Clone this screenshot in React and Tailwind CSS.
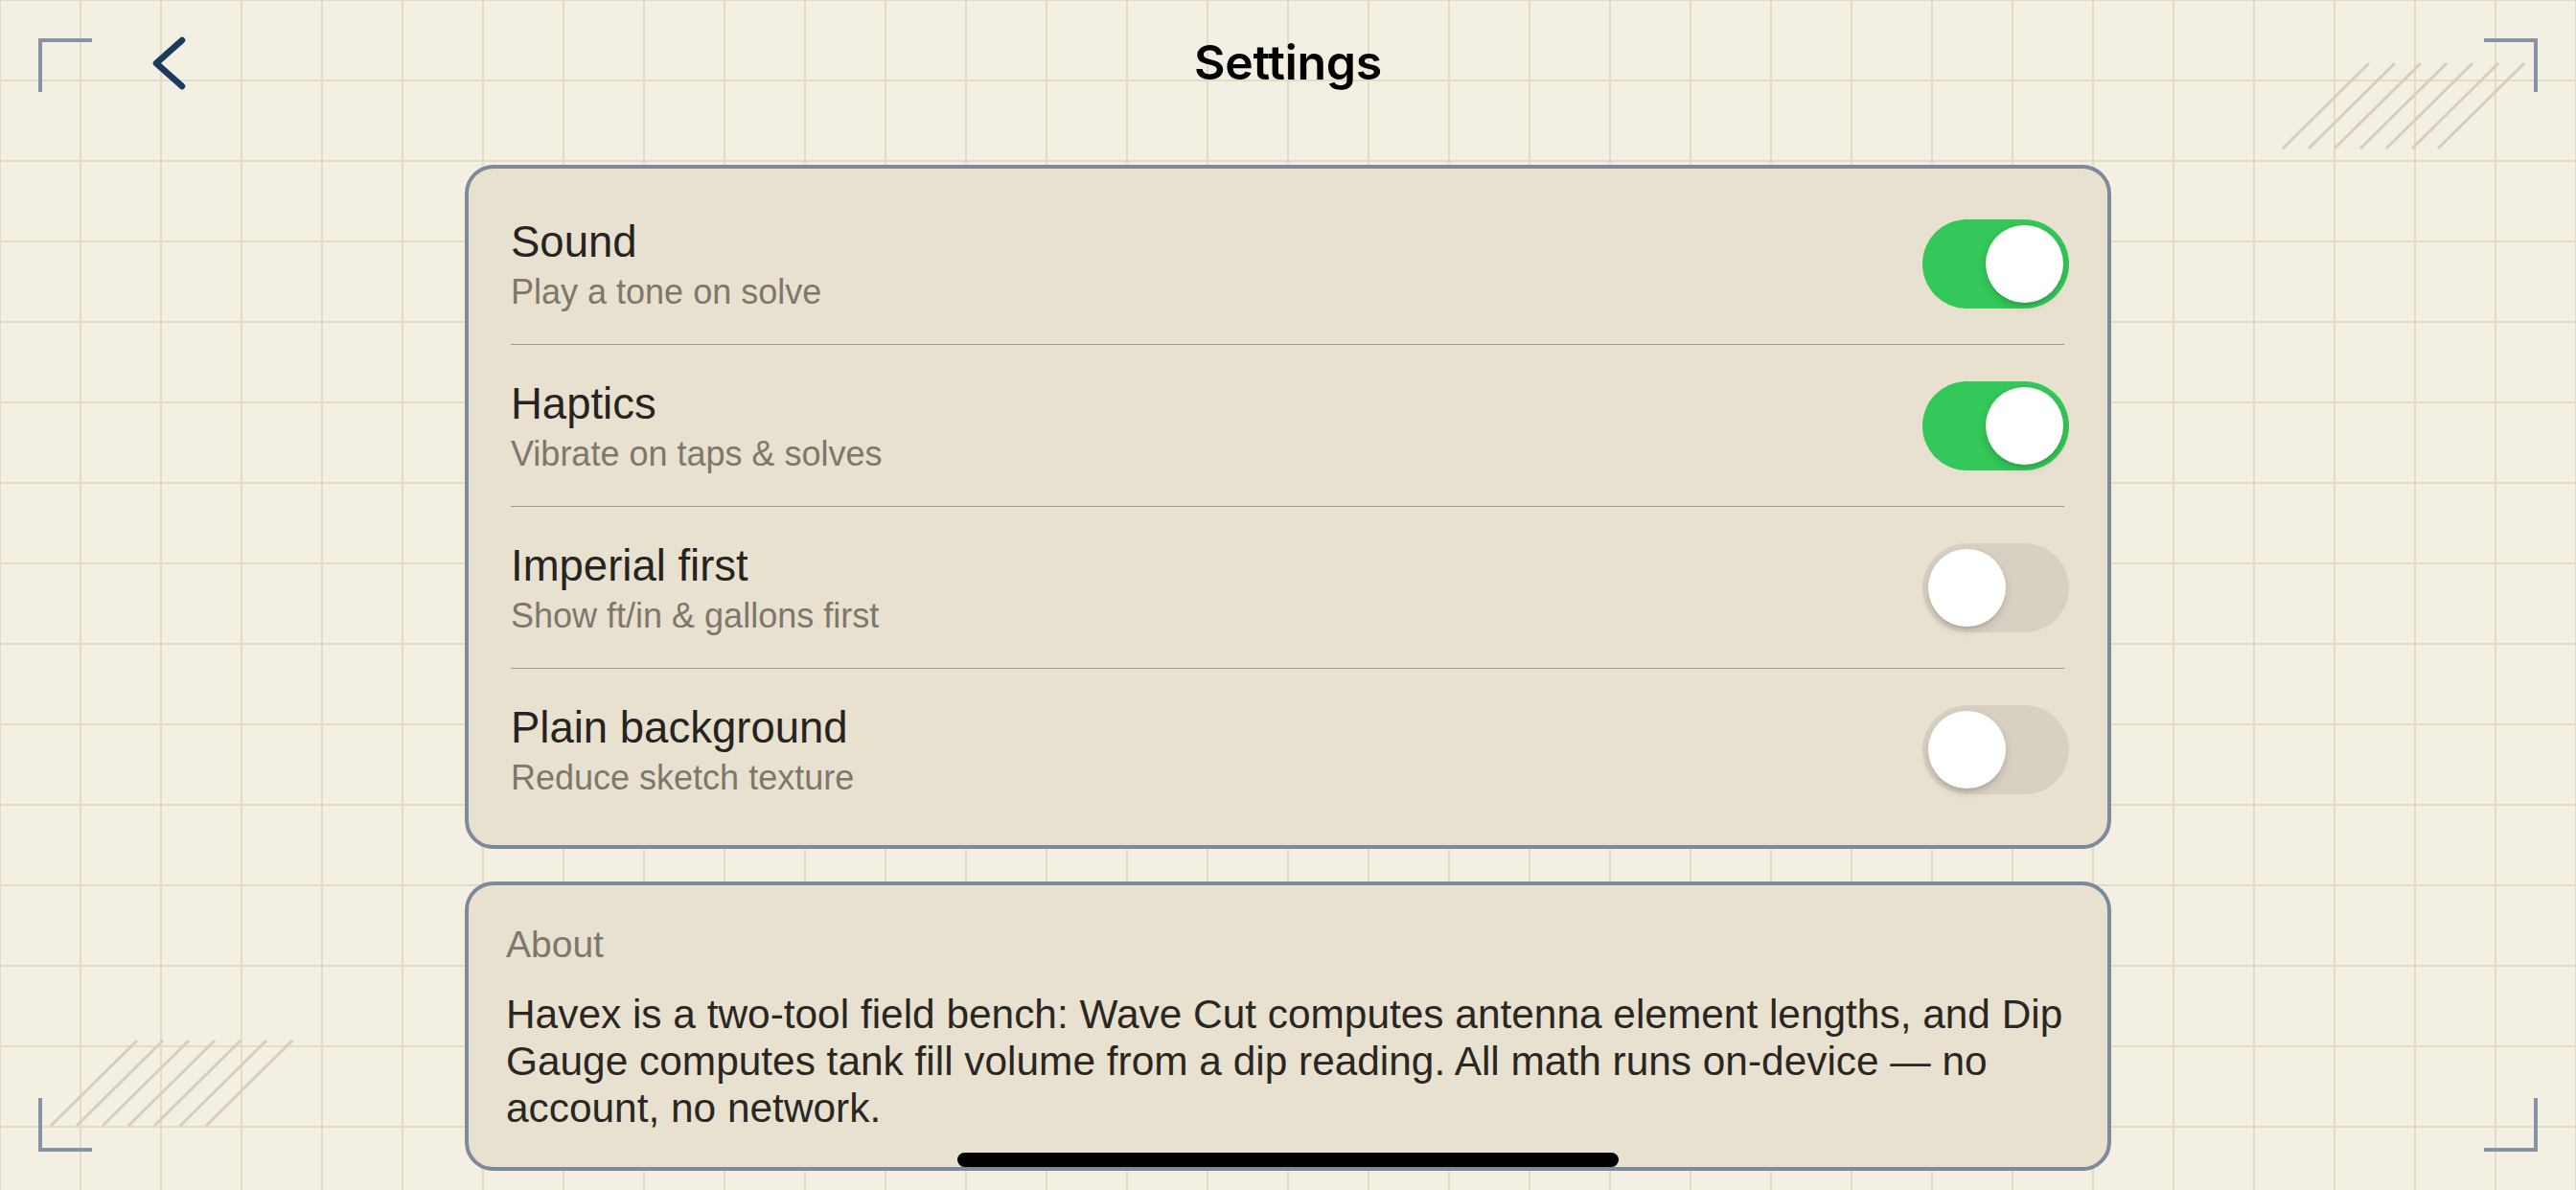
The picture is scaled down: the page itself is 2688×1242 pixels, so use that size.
import React, { useState } from 'react';

const rows = [
  { id: 'sound', t: 'Sound', d: 'Play a tone on solve', on: true },
  { id: 'haptics', t: 'Haptics', d: 'Vibrate on taps & solves', on: true },
  { id: 'imperial', t: 'Imperial first', d: 'Show ft/in & gallons first', on: false },
  { id: 'plain', t: 'Plain background', d: 'Reduce sketch texture', on: false },
];

function Toggle({ on, onClick }) {
  return (
    <button
      onClick={onClick}
      className={
        'relative w-[153px] h-[93px] rounded-full flex items-center px-[6px] shrink-0 transition-colors ' +
        (on ? 'bg-[#34c759] justify-end' : 'bg-[#d8d1c3] justify-start')
      }
    >
      <span className="block w-[81px] h-[81px] rounded-full bg-white shadow-[0_4px_10px_rgba(0,0,0,0.15),0_3px_1px_rgba(0,0,0,0.05)]" />
    </button>
  );
}

function Hatch({ className }) {
  // seven diagonal strokes, the sketchy corner texture
  return (
    <svg className={className} width="256" height="93" viewBox="0 0 256 93" fill="none">
      {[0, 1, 2, 3, 4, 5, 6].map((i) => (
        <line key={i} x1={2 + i * 27} y1="91" x2={92 + i * 27} y2="2" stroke="#d6cebf" strokeWidth="3" />
      ))}
    </svg>
  );
}

export default function App() {
  const [vals, setVals] = useState(() => Object.fromEntries(rows.map((r) => [r.id, r.on])));

  return (
    <div className="relative w-full h-[1242px] overflow-hidden bg-[#f3efe3] bg-[linear-gradient(to_right,#e3dac8_2px,transparent_2px),linear-gradient(to_bottom,#e3dac8_2px,transparent_2px)] bg-[size:84px_84px] bg-[position:-1px_-1px] font-['Liberation_Sans',Arial,sans-serif]">

      {/* corner marks */}
      <div className="absolute left-[40px] top-[40px] w-[56px] h-[56px] border-l-4 border-t-4 border-[#8894a1]" />
      <div className="absolute right-[40px] top-[40px] w-[56px] h-[56px] border-r-4 border-t-4 border-[#8894a1]" />
      <div className="absolute left-[40px] bottom-[40px] w-[56px] h-[56px] border-l-4 border-b-4 border-[#8894a1]" />
      <div className="absolute right-[40px] bottom-[40px] w-[56px] h-[56px] border-r-4 border-b-4 border-[#8894a1]" />
      <Hatch className="absolute left-[2380px] top-[64px]" />
      <Hatch className="absolute left-[51px] top-[1084px]" />

      {/* Header */}
      <div className="grid grid-cols-[1fr_auto_1fr] items-center h-[130px]">
        <div className="pl-[158px] pt-[2px]">
          <button className="block">
            <svg width="36" height="56" viewBox="0 0 36 56" fill="none" stroke="#1c3a5e" strokeWidth="6.5" strokeLinecap="round" strokeLinejoin="round">
              <path d="M32 4L5 28L32 52" />
            </svg>
          </button>
        </div>
        <h1 className="font-['Inter',sans-serif] font-semibold text-[50px] text-black tracking-[-0.3px]">Settings</h1>
        <div />
      </div>

      {/* Toggles card */}
      <div className="mx-auto mt-[42px] w-[1718px] rounded-[30px] border-4 border-[#7c8a9a] bg-[#e8e1d0] pl-[44px] pr-[40px] pt-[15px] pb-[16px]">
        {rows.map((r, i) => (
          <div key={r.id}>
            {i > 0 && <div className="h-px bg-[#a29a8b] mr-[5px]" />}
            <div className="h-[168px] flex items-center justify-between">
              <div className="flex flex-col pt-[2px]">
                <span className="text-[45.5px] leading-[54px] text-[#27241f]">{r.t}</span>
                <span className="mt-[4px] text-[36px] leading-[42px] text-[#7d776c]">{r.d}</span>
              </div>
              <Toggle on={vals[r.id]} onClick={() => setVals({ ...vals, [r.id]: !vals[r.id] })} />
            </div>
          </div>
        ))}
      </div>

      {/* About card */}
      <div className="mx-auto mt-[34px] w-[1718px] rounded-[30px] border-4 border-[#7c8a9a] bg-[#e8e1d0] pl-[39px] pr-[16px] pt-[39px] pb-[37px]">
        <p className="text-[39px] leading-[46px] text-[#7d776c]">About</p>
        <p className="mt-[25px] text-[42.4px] leading-[49px] text-[#2a2723]">
          Havex is a two-tool field bench: Wave Cut computes antenna element lengths, and Dip Gauge computes tank fill volume from a dip reading. All math runs on-device — no account, no network.
        </p>
      </div>

      {/* home indicator */}
      <div className="absolute left-[999px] bottom-[24px] w-[690px] h-[15px] rounded-full bg-black" />
    </div>
  );
}
